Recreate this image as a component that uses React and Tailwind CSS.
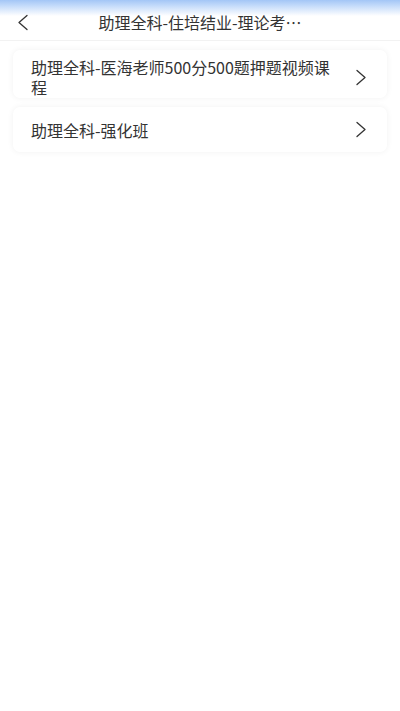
const courses = [
  { id: 1, name: "助理全科-医海老师500分500题押题视频课程" },
  { id: 2, name: "助理全科-强化班" },
];

function Chevron({ dir = "right", className = "" }) {
  const d = dir === "right" ? "M2 1.5 L10 8.5 L2 15.5" : "M10 1.5 L2 8.5 L10 15.5";
  return (
    <svg
      className={className}
      width="12"
      height="17"
      viewBox="0 0 12 17"
      fill="none"
      stroke="#333"
      strokeWidth="1.3"
      strokeLinecap="round"
      strokeLinejoin="round"
    >
      <path d={d} />
    </svg>
  );
}

export default function App() {
  return (
    <div
      className="min-h-[711px] bg-white text-[#333]"
      style={{ fontFamily: '"Noto Sans CJK SC", "Noto Sans", sans-serif' }}
    >
      {/* Header */}
      <div className="relative h-[41px] border-b border-[#f2f2f2] bg-gradient-to-b from-[#a3c6f6] via-white via-40% to-white">
        <div className="flex h-[40px] items-center justify-center pt-[4px]">
          <span className="text-[16px] leading-[20px] text-[#333]">助理全科-住培结业-理论考…</span>
        </div>
        <Chevron dir="left" className="absolute left-[17px] top-[14px]" />
      </div>

      {/* Course list */}
      <div className="flex flex-col gap-[9px] px-[13px] pt-[9px]">
        {courses.map((c, i) => (
          <div
            key={c.id}
            className={`flex items-center justify-between rounded-[7px] bg-white pl-[18px] pr-[20px] shadow-[0_0_6px_rgba(0,0,0,0.06)] ${
              i === 0 ? "pt-[7px] pb-[1px] min-h-[48px]" : "min-h-[45px]"
            }`}
          >
            <span className="w-[310px] text-[16px] leading-[20px] text-[#333]">{c.name}</span>
            <Chevron />
          </div>
        ))}
      </div>
    </div>
  );
}
